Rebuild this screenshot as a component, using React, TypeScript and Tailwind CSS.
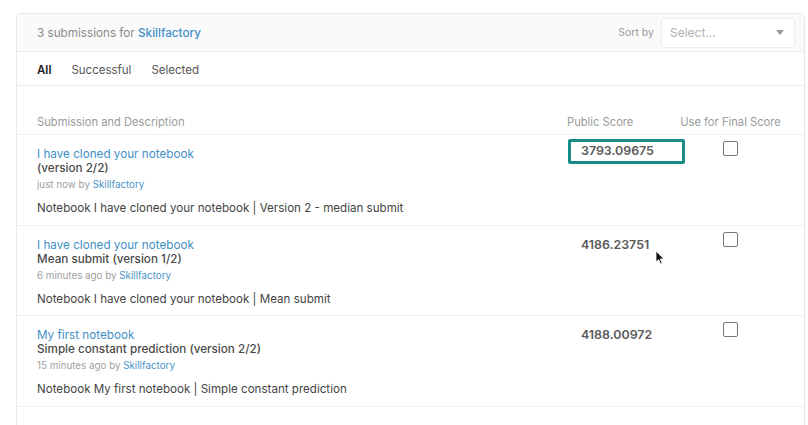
import React from "react";

const rows = [
  {
    title: "I have cloned your notebook",
    sub: "(version 2/2)",
    when: "just now",
    desc: "Notebook I have cloned your notebook | Version 2 - median submit",
    score: "3793.09675",
    hl: true,
    cursor: false,
  },
  {
    title: "I have cloned your notebook",
    sub: "Mean submit (version 1/2)",
    when: "6 minutes ago",
    desc: "Notebook I have cloned your notebook | Mean submit",
    score: "4186.23751",
    hl: false,
    cursor: true,
  },
  {
    title: "My first notebook",
    sub: "Simple constant prediction (version 2/2)",
    when: "15 minutes ago",
    desc: "Notebook My first notebook | Simple constant prediction",
    score: "4188.00972",
    hl: false,
    cursor: false,
  },
];

export default function App() {
  return (
    <div
      className="w-[808px] h-[425px] bg-white overflow-hidden pt-[13px] pl-[16px] pr-[3px]"
      style={{ fontFamily: "Inter, 'Liberation Sans', sans-serif" }}
    >
      <div className="border border-[#e8e8e8] rounded-t-[4px] h-[440px]">
        <div className="h-[38px] bg-[#fafafa] border-b border-[#ededed] flex items-center pl-[20px] pr-[9px]">
          <div className="text-[11.7px] text-[#8a8a8a] mt-[3px]">
            3 submissions for{" "}
            <span className="text-[#3f8fc7] font-medium">Skillfactory</span>
          </div>
          <div className="ml-auto flex items-center">
            <span className="text-[10.5px] text-[#9a9a9a] mr-[7px]">Sort by</span>
            <div className="w-[134px] h-[30px] bg-white border border-[#ececec] rounded-[3px] flex items-center pl-[8px] pr-[10px]">
              <span className="text-[12px] text-[#b0b0b0]">Select...</span>
              <svg className="ml-auto" width="8" height="5" viewBox="0 0 8 5">
                <path d="M0 0 L8 0 L4 5 Z" fill="#9a9a9a" />
              </svg>
            </div>
          </div>
        </div>
        <div className="h-[34px] border-b border-[#ececec] flex items-center pl-[20px] gap-[20px] text-[11.5px] pt-[4px]">
          <span className="text-[#222] font-semibold">All</span>
          <span className="text-[#555]">Successful</span>
          <span className="text-[#555]">Selected</span>
        </div>
        <div className="h-[49px] border-b border-[#f0f0f0] flex items-end pb-[3px] pl-[20px] text-[11.2px] text-[#9a9a9a] whitespace-nowrap">
          <div className="flex-1">Submission and Description</div>
          <div className="w-[112px]">Public Score</div>
          <div className="w-[103px] flex justify-center mr-[22px]">Use for Final Score</div>
        </div>
        {rows.map((r, i) => (
          <div
            key={i}
            className="h-[90.5px] border-b border-[#f0f0f0] flex pl-[20px] pt-[12px]"
          >
            <div className="flex-1">
              <div className="text-[11.7px] leading-[14px] text-[#3f8fc7]">{r.title}</div>
              <div className="text-[11.7px] leading-[14px] text-[#4a4a4a] font-medium">{r.sub}</div>
              <div className="text-[9.8px] leading-[12px] mt-[4px] text-[#a0a0a0]">
                {r.when} by <span className="text-[#4a93c9]">Skillfactory</span>
              </div>
              <div className="text-[11.6px] leading-[14px] mt-[10px] text-[#444]">{r.desc}</div>
            </div>
            <div className="w-[112px] pl-[14px] relative">
              {r.hl ? (
                <div className="w-[117px] h-[25px] -ml-[13px] -mt-[8px] border-[3px] border-[#168a85] rounded-[2px] flex items-center pl-[10px] text-[12.4px] font-semibold text-[#5a5a5a] whitespace-nowrap">
                  {r.score}
                </div>
              ) : (
                <div className="text-[12.4px] leading-[14px] font-semibold text-[#5a5a5a]">{r.score}</div>
              )}
              {r.cursor && (
                <svg className="absolute left-[88px] top-[12px]" width="10" height="15" viewBox="0 0 10 15">
                  <path d="M1 1 L1 12 L3.6 9.6 L5.6 14 L7.2 13.3 L5.3 9 L8.8 9 Z" fill="#111" stroke="#fff" strokeWidth="0.8" />
                </svg>
              )}
            </div>
            <div className="w-[103px] mr-[22px] flex justify-center">
              <div className="w-[15px] h-[15px] border-[1.5px] border-[#777] rounded-[2px] bg-white -mt-[6px]" />
            </div>
          </div>
        ))}
      </div>
    </div>
  );
}
